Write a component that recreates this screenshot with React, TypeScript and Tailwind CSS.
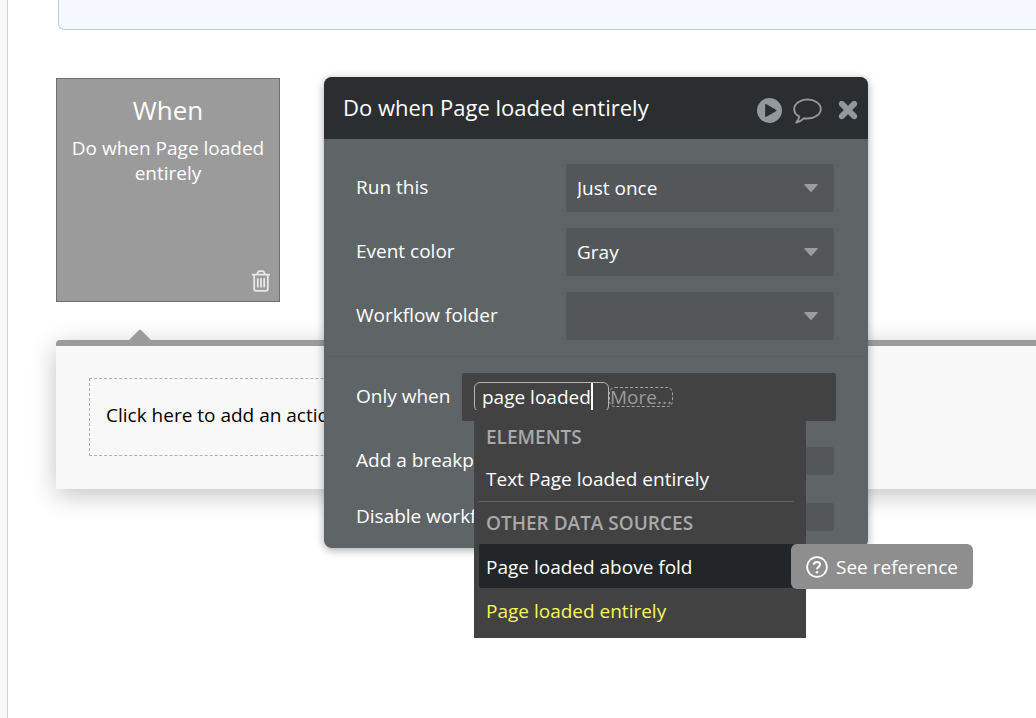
import type { ReactNode } from "react";

const settings = [
  { id: "run-this", label: "Run this", value: "Just once" },
  { id: "event-color", label: "Event color", value: "Gray" },
  { id: "workflow-folder", label: "Workflow folder", value: "" },
];

function PlayIcon() {
  return (
    <svg className="size-[25px]" viewBox="0 0 24 24" fill="currentColor">
      <path
        fillRule="evenodd"
        d="M12 0a12 12 0 1 0 0 24a12 12 0 0 0 0-24ZM9 6Q7.8 5.4 7.8 6.8V17.2Q7.8 18.6 9 18L18.2 12.8Q19.4 12 18.2 11.2Z"
      />
    </svg>
  );
}

function CommentIcon() {
  return (
    <svg
      className="h-[27px] w-[29px]"
      viewBox="0 0 29 27"
      fill="none"
      stroke="currentColor"
      strokeWidth="1.9"
      strokeLinejoin="round"
    >
      <path d="M14.5 2.4C7.4 2.4 1.2 6.6 1.2 12C1.2 15.2 3.2 18 6.4 19.7C6 22 4.8 23.4 3.2 25.6C6.4 25 9 23.4 11.1 21.2C12.2 21.4 13.3 21.5 14.5 21.5C21.6 21.5 27.8 17.3 27.8 12C27.8 6.6 21.6 2.4 14.5 2.4Z" />
    </svg>
  );
}

function CloseIcon() {
  return (
    <svg
      className="size-5"
      viewBox="0 0 20 20"
      stroke="currentColor"
      strokeWidth="6"
    >
      <path d="M3 3L17 17M17 3L3 17" />
      <path
        d="M3.4 3.4L16.6 16.6M16.6 3.4L3.4 16.6"
        strokeLinecap="round"
        strokeWidth="5"
      />
    </svg>
  );
}

function TrashIcon() {
  return (
    <svg
      className="h-[22px] w-5"
      viewBox="0 0 20 22"
      fill="none"
      stroke="currentColor"
      strokeWidth="1.8"
    >
      <path d="M1 4.7H19M6 4.5L7 2.2Q7.4 1.2 8.4 1.2H11.6Q12.6 1.2 13 2.2L14 4.5M3.2 5V19Q3.2 20.8 5 20.8H15Q16.8 20.8 16.8 19V5M6.8 8.2V17.4M10 8.2V17.4M13.2 8.2V17.4" />
    </svg>
  );
}

function HelpIcon() {
  return (
    <svg
      className="size-[22px]"
      viewBox="0 0 22 22"
      fill="none"
      stroke="currentColor"
      strokeWidth="1.7"
    >
      <circle cx="11" cy="11" r="9.9" />
      <path
        d="M7.9 8.8C7.9 7 9.2 5.9 11 5.9C12.8 5.9 14.1 7 14.1 8.6C14.1 10.7 11 10.8 11 13.2"
        strokeWidth="2"
      />
      <circle cx="11" cy="16.2" r="1.3" fill="currentColor" stroke="none" />
    </svg>
  );
}

function MenuHeading({ children }: { children: ReactNode }) {
  return (
    <p className="flex h-[42px] items-center px-[7px] font-semibold text-[#a9a9a9]">
      {children}
    </p>
  );
}

function SourceMenu() {
  return (
    <div className="absolute top-[37px] left-3 z-10 w-[332px] bg-[#424242] py-1.5 pr-3 pl-[5px]">
      <MenuHeading>ELEMENTS</MenuHeading>
      <button className="flex h-11 w-full items-center border-b border-[#636363] px-[7px] pb-0.5 text-white">
        Text Page loaded entirely
      </button>
      <MenuHeading>OTHER DATA SOURCES</MenuHeading>
      <div className="relative">
        <button className="flex h-11 w-full items-center rounded-xs bg-[#232628] px-[7px] pt-0.5 text-white">
          Page loaded above fold
        </button>
        <a
          className="absolute top-0 left-full -ml-[3px] flex h-[45px] items-center gap-2 rounded-md bg-[#8e8e8e] px-[15px] whitespace-nowrap text-white"
          href="#reference"
        >
          <HelpIcon />
          See reference
        </a>
      </div>
      <button className="flex h-11 w-full items-center px-[7px] pt-0.5 text-[#f6f65c]">
        Page loaded entirely
      </button>
    </div>
  );
}

function EventPanel() {
  return (
    <section className="absolute -top-px left-[268px] z-10 w-[544px] rounded-lg bg-[#5f6567] text-[19px] leading-7 text-white shadow-[0_2px_8px_rgba(0,0,0,0.35)]">
      <header className="flex h-[62px] items-center justify-between rounded-t-lg bg-[#2a2e30] pr-2.5 pl-[19px]">
        <h2 className="pb-0.5 text-[22px]">Do when Page loaded entirely</h2>
        <div className="flex items-center gap-[15px] pt-1 text-[#92989b]">
          <button aria-label="Run">
            <PlayIcon />
          </button>
          <div className="flex items-center gap-4">
            <button className="-ml-1" aria-label="Comment">
              <CommentIcon />
            </button>
            <button aria-label="Close">
              <CloseIcon />
            </button>
          </div>
        </div>
      </header>

      <div className="flex flex-col gap-4 border-b border-[#5b6163] pt-[25px] pr-[34px] pb-4 pl-8">
        {settings.map((item) => (
          <div className="flex items-center justify-between" key={item.id}>
            <label className="pb-0.5" htmlFor={item.id}>
              {item.label}
            </label>
            <div className="relative w-[268px]">
              <select
                className="h-12 w-full appearance-none rounded-xs bg-[#53575a] px-[11px]"
                id={item.id}
                defaultValue={item.value}
              >
                <option>{item.value}</option>
              </select>
              <svg
                className="pointer-events-none absolute top-5 right-4 h-2 w-3.5 text-[#989c9e]"
                viewBox="0 0 14 8"
                fill="currentColor"
              >
                <path d="M1 0H13Q14.4 0.2 13.4 1.3L8 7.2Q7 8.2 6 7.2L0.6 1.3Q-0.4 0.2 1 0Z" />
              </svg>
            </div>
          </div>
        ))}
      </div>

      <div className="flex items-center justify-between pt-4 pr-8 pl-8">
        <label className="pb-0.5" htmlFor="only-when">
          Only when
        </label>
        <div className="relative flex h-12 w-[374px] items-center rounded-xs bg-[#424242] px-3">
          <div className="flex h-[30px] w-[135px] items-center rounded-md border border-[#b5b5b5] pl-[7px]">
            <input
              className="field-sizing-content bg-transparent outline-none"
              id="only-when"
              defaultValue="page loaded"
            />
            <span className="h-7 w-0.5 bg-white" />
          </div>
          <button className="flex h-5 items-center rounded-md border border-dashed border-[#a5a5a5] text-[#9a9a9a]">
            More...
          </button>
          <SourceMenu />
        </div>
      </div>

      <div className="flex flex-col gap-7 pt-[26px] pr-[34px] pb-[17px] pl-8">
        <div className="flex h-7 items-center justify-between">
          <label className="pb-0.5" htmlFor="breakpoint">
            Add a breakpoint
          </label>
          <input
            className="size-7 appearance-none rounded-xs bg-[#53575a]"
            id="breakpoint"
            type="checkbox"
          />
        </div>
        <div className="flex h-7 items-center justify-between">
          <label className="pb-0.5" htmlFor="disable">
            Disable workflow
          </label>
          <input
            className="size-7 appearance-none rounded-xs bg-[#53575a]"
            id="disable"
            type="checkbox"
          />
        </div>
      </div>
    </section>
  );
}

export default function App() {
  return (
    <div className="flex min-h-screen overflow-hidden bg-white font-['Open_Sans',sans-serif] text-black">
      <aside className="w-2 shrink-0 border-r border-[#d4d4d4] bg-[#f9f9f9]" />

      <main className="min-w-0 flex-1 pl-12">
        <div className="ml-0.5 h-[30px] rounded-bl-md border-b border-l border-[#b9cde6] bg-[#f5f9ff]" />

        <div className="relative mt-12">
          <article className="flex size-56 flex-col items-center border border-[#707070] bg-[#9b9b9b] px-2 pt-[15px] pb-[9px] text-center text-white">
            <h1 className="text-[26px] leading-8">When</h1>
            <p className="mt-2.5 text-[19px] leading-[25px]">
              Do when Page loaded entirely
            </p>
            <button
              aria-label="Delete event"
              className="mt-auto self-end text-[#e8e8e8]"
            >
              <TrashIcon />
            </button>
          </article>
          <EventPanel />
        </div>

        {/* runs past the right edge, so the side shadow stays off screen */}
        <section className="relative mt-[38px] -mr-12 rounded-tl-sm border-t-6 border-[#9b9b9b] bg-[#f8f8f8] pt-8 pb-[33px] pl-[33px] shadow-[0_6px_26px_rgba(0,0,0,0.24)]">
          <svg
            className="absolute -top-[17px] left-[72px] h-3 w-6 text-[#9b9b9b]"
            viewBox="0 0 24 12"
            fill="currentColor"
          >
            <path d="M0 12L11 1Q12 0 13 1L24 12Z" />
          </svg>
          <button className="flex h-[78px] w-80 items-center border border-dashed border-[#b0b0b0] px-4 pb-1 text-[19px]">
            Click here to add an action...
          </button>
        </section>
      </main>
    </div>
  );
}
